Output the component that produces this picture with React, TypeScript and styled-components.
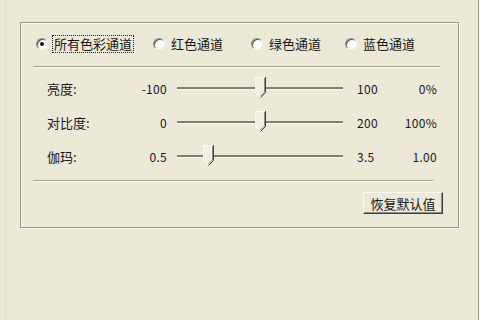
import React from 'react'
import styled, { createGlobalStyle } from 'styled-components'

const GlobalStyle = createGlobalStyle`
  html, body {
    margin: 0;
    padding: 0;
    background: #ece9d8;
  }
  body {
    font-family: "Noto Sans CJK SC", "Liberation Sans", sans-serif;
    color: #161616;
  }
`

const Screen = styled.div`
  width: 480px;
  height: 320px;
  display: flex;
  background: #ece9d8;
  overflow: hidden;
`

const Panel = styled.div`
  box-sizing: border-box;
  width: 474px;
  height: 320px;
  margin-left: 5px;
  padding: 22px 0 0 14px;
  border-left: 1px solid #e2dfcf;
  border-right: 1px solid #9e9d92;
  box-shadow: 1px 0 0 #f7f6ef;
`

const GroupBox = styled.div`
  box-sizing: border-box;
  width: 439px;
  height: 206px;
  border: 1px solid #96958a;
  box-shadow: 1px 1px 0 #fbfaf4, inset 1px 1px 0 #fbfaf4;
  display: flex;
  flex-direction: column;
`

const RadioRow = styled.div`
  display: grid;
  grid-template-columns: 117px 98px 94px auto;
  align-items: center;
  height: 18px;
  margin: 12px 0 0 15px;
`

const RadioItem = styled.label`
  display: flex;
  align-items: center;
  gap: 5px;
  font-size: 13px;
  line-height: 16px;
  white-space: nowrap;
`

const RadioCircle = styled.span<{ $checked?: boolean }>`
  box-sizing: border-box;
  width: 12px;
  height: 12px;
  border-radius: 50%;
  border: 1px solid;
  border-color: #8d8c83 #f4f3ec #f4f3ec #8d8c83;
  background: #fdfdfb;
  box-shadow: inset 1px 1px 0 #55554f;
  display: flex;
  align-items: center;
  justify-content: center;
  &::after {
    content: '';
    width: 4px;
    height: 4px;
    border-radius: 50%;
    background: ${p => (p.$checked ? '#111' : 'transparent')};
  }
`

const RadioText = styled.span<{ $focused?: boolean }>`
  padding: 0 1px;
  outline: ${p => (p.$focused ? '1px dotted #222' : 'none')};
`

const Separator = styled.div<{ $width: number; $top: number }>`
  width: ${p => p.$width}px;
  height: 1px;
  margin: ${p => p.$top}px 0 0 12px;
  background: #a09f93;
  border-bottom: 1px solid #fbfaf4;
`

const Rows = styled.div`
  margin: 3px 0 0 26px;
`

const SliderRow = styled.div`
  display: grid;
  grid-template-columns: 80px 40px 190px 40px 40px;
  align-items: center;
  height: 34px;
  font-size: 12px;
`

const Label = styled.span`
  font-size: 13px;
`

const Value = styled.span<{ $align: 'left' | 'right' }>`
  text-align: ${p => p.$align};
  letter-spacing: 0.3px;
`

const TrackCell = styled.div`
  padding: 0 14px 0 10px;
`

const Track = styled.div`
  position: relative;
  height: 2px;
  background: #7f7e75;
  border-bottom: 1px solid #fbfaf4;
`

const Thumb = styled.svg`
  position: absolute;
  top: -10px;
  width: 11px;
  height: 21px;
  margin-left: -5px;
`

const ButtonBar = styled.div`
  display: flex;
  justify-content: flex-end;
  padding-right: 15px;
  margin-top: 10px;
`

const ClassicButton = styled.button`
  box-sizing: border-box;
  width: 80px;
  height: 22px;
  padding: 0;
  font-family: "Noto Sans CJK SC", "Liberation Sans", sans-serif;
  font-size: 13px;
  color: #161616;
  background: #ece9d8;
  border: 1px solid;
  border-color: #fcfbf6 #3e3e3a #3e3e3a #fcfbf6;
  box-shadow: inset -1px -1px 0 #8f8e84;
`

interface SliderSpec {
  label: string
  min: number
  max: number
  value: number
  minText: string
  maxText: string
  readout: string
}

const sliders: SliderSpec[] = [
  { label: '亮度:', min: -100, max: 100, value: 0, minText: '-100', maxText: '100', readout: '0%' },
  { label: '对比度:', min: 0, max: 200, value: 100, minText: '0', maxText: '200', readout: '100%' },
  { label: '伽玛:', min: 0.5, max: 3.5, value: 1, minText: '0.5', maxText: '3.5', readout: '1.00' },
]

const channels = ['所有色彩通道', '红色通道', '绿色通道', '蓝色通道']

const TRACK_WIDTH = 166
const THUMB_WIDTH = 10

const SliderThumb: React.FC<{ left: number }> = ({ left }) => (
  <Thumb viewBox="0 0 11 21" style={{ left }}>
    <polygon points="0.5,0.5 10.5,0.5 10.5,15.5 5.5,20.5 0.5,15.5" fill="#f1efe4" />
    <polyline points="0.5,15.5 0.5,0.5 10,0.5" fill="none" stroke="#fcfbf6" />
    <polyline points="10.5,0 10.5,15.5 5.5,20.5" fill="none" stroke="#3e3e3a" />
    <polyline points="9.5,1 9.5,15 5.5,19" fill="none" stroke="#8f8e84" />
    <line x1="0.5" y1="15.5" x2="5" y2="20" stroke="#fcfbf6" />
  </Thumb>
)

const App: React.FC = () => {
  return (
    <Screen>
      <GlobalStyle />
      <Panel>
        <GroupBox>
          <RadioRow>
            {channels.map((name, i) => (
              <RadioItem key={name}>
                <RadioCircle $checked={i === 0} />
                <RadioText $focused={i === 0}>{name}</RadioText>
              </RadioItem>
            ))}
          </RadioRow>
          <Separator $width={407} $top={13} />
          <Rows>
            {sliders.map(s => {
              const f = (s.value - s.min) / (s.max - s.min)
              const center = THUMB_WIDTH / 2 + f * (TRACK_WIDTH - THUMB_WIDTH)
              return (
                <SliderRow key={s.label}>
                  <Label>{s.label}</Label>
                  <Value $align="right">{s.minText}</Value>
                  <TrackCell>
                    <Track>
                      <SliderThumb left={center} />
                    </Track>
                  </TrackCell>
                  <Value $align="left">{s.maxText}</Value>
                  <Value $align="right">{s.readout}</Value>
                </SliderRow>
              )
            })}
          </Rows>
          <Separator $width={400} $top={7} />
          <ButtonBar>
            <ClassicButton>恢复默认值</ClassicButton>
          </ButtonBar>
        </GroupBox>
      </Panel>
    </Screen>
  )
}

export default App
